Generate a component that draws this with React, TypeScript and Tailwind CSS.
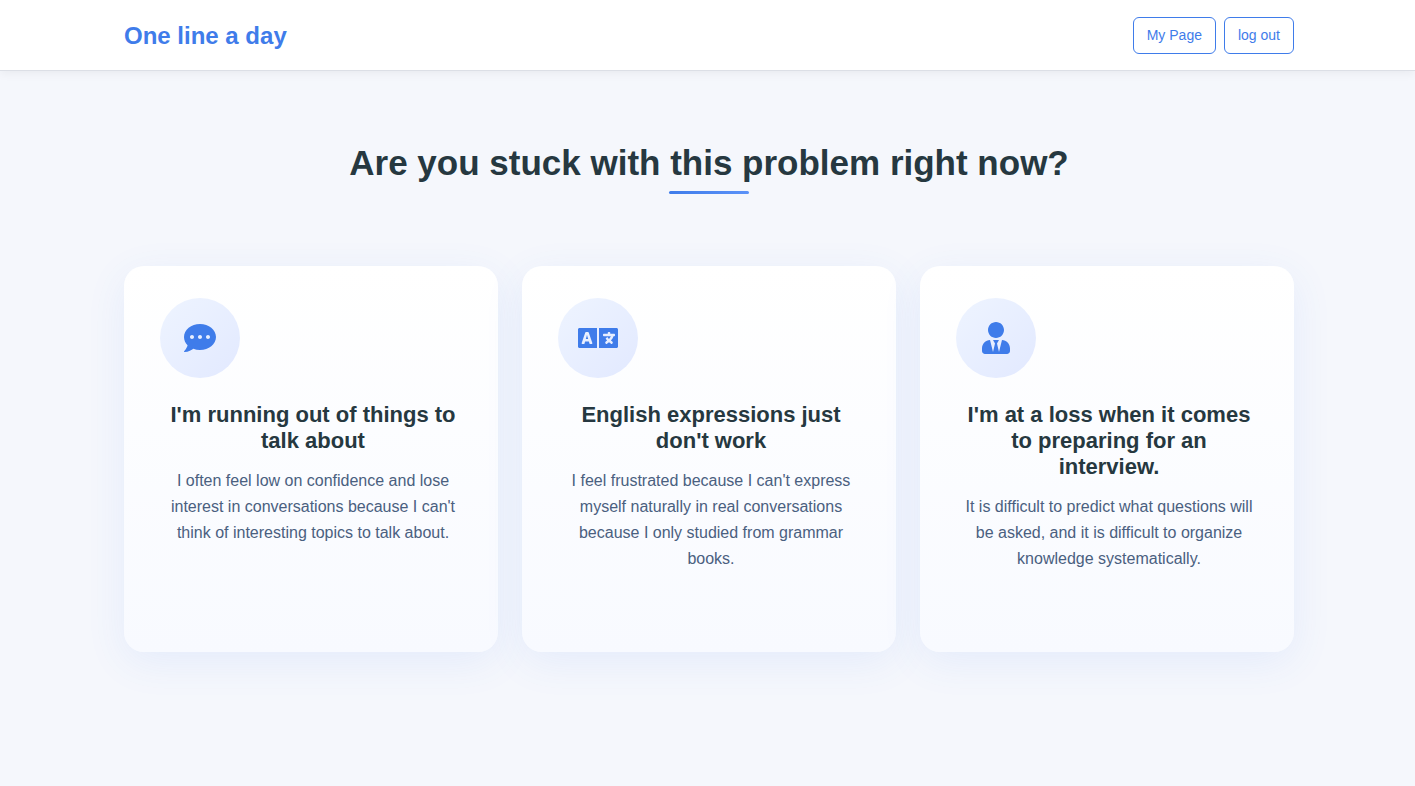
import type { IconType } from 'react-icons';
import { FaCommentDots, FaLanguage, FaUserTie } from 'react-icons/fa';

interface Problem {
  icon: IconType;
  size: string;
  title: string;
  text: string;
}

const PROBLEMS: Problem[] = [
  {
    icon: FaCommentDots,
    size: 'w-8 h-8',
    title: "I'm running out of things to talk about",
    text: "I often feel low on confidence and lose interest in conversations because I can't think of interesting topics to talk about.",
  },
  {
    icon: FaLanguage,
    size: 'w-10 h-8',
    title: "English expressions just don't work",
    text: "I feel frustrated because I can't express myself naturally in real conversations because I only studied from grammar books.",
  },
  {
    icon: FaUserTie,
    size: 'w-7 h-8',
    title: "I'm at a loss when it comes to preparing for an interview.",
    text: 'It is difficult to predict what questions will be asked, and it is difficult to organize knowledge systematically.',
  },
];

const BUTTON = 'px-[13px] py-2 text-sm leading-[19px] text-[#3f7cea] border border-[#3f7cea] rounded-md hover:bg-blue-50';

function Header() {
  return (
    <header className="relative bg-white border-b border-[#dcdfe6] shadow-[0_2px_10px_rgba(0,0,0,0.06)] pl-[3px]">
      <div className="max-w-[1170px] mx-auto flex items-center justify-between pt-[17px] pb-4">
        <a href="#" className="text-2xl font-bold text-[#3f7cea]">One line a day</a>
        <nav className="flex gap-2">
          <button type="button" className={BUTTON}>My Page</button>
          <button type="button" className={BUTTON}>log out</button>
        </nav>
      </div>
    </header>
  );
}

function ProblemCard({ icon: Icon, size, title, text }: Problem) {
  return (
    <article className="min-h-[386px] rounded-[20px] bg-linear-to-b from-white to-[#f8faff] pt-8 pb-8 pl-9 pr-8 shadow-[0_10px_40px_rgba(63,124,240,0.09)]">
      <div className="w-20 h-20 mb-6 rounded-full flex items-center justify-center bg-linear-to-br from-[#eef4ff] to-[#e2e9ff]">
        <Icon className={`${size} text-[#3f7cea]`} />
      </div>
      <h3 className="mb-3.5 px-1 text-[22px] leading-[26px] font-bold text-center text-[#263840]">{title}</h3>
      <p className="text-base leading-[26px] text-center text-[#4a6080]">{text}</p>
    </article>
  );
}

export default function App() {
  return (
    <div className="min-h-screen flex flex-col bg-[#f5f7fc] font-['Liberation_Sans',Arial,sans-serif]">
      <Header />
      <main className="flex-1 pt-[70px] pb-20 pl-[3px]">
        <div className="max-w-[1170px] mx-auto">
          <h2 className="text-[35px] leading-[44px] font-bold text-center text-[#263840]">
            Are you stuck with this problem right now?
          </h2>
          <div className="w-20 h-[3px] mt-1.5 mb-18 mx-auto rounded-sm bg-linear-to-r from-[#3f7cea] to-[#5b92f8]" />
          <div className="grid grid-cols-3 gap-6">
            {PROBLEMS.map((p) => (
              <ProblemCard key={p.title} {...p} />
            ))}
          </div>
        </div>
      </main>
    </div>
  );
}
